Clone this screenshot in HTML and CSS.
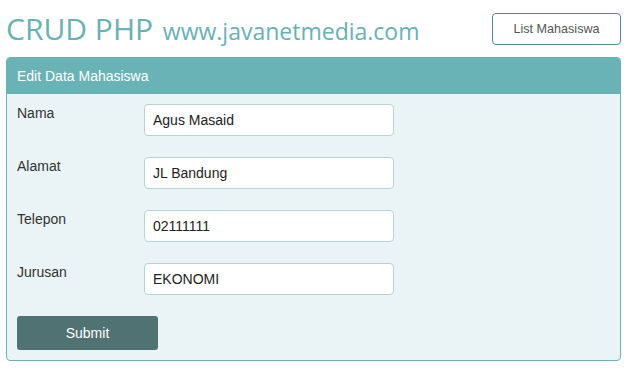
FILE: index.html
```html
<!DOCTYPE html>
<html>
<head>
<meta charset="utf-8">
<link rel="stylesheet" href="styles.css">
</head>
<body>
<div class="page">
  <div class="topbar">
    <h1 class="title">CRUD PHP <small class="site">www.javanetmedia.com</small></h1>
    <a class="list-btn" href="#">List Mahasiswa</a>
  </div>
  <div class="panel">
    <div class="panel-head">Edit Data Mahasiswa</div>
    <form class="panel-body">
      <div class="row">
        <label class="lbl">Nama</label>
        <input class="inp" type="text" value="Agus Masaid">
      </div>
      <div class="row">
        <label class="lbl">Alamat</label>
        <input class="inp" type="text" value="JL Bandung">
      </div>
      <div class="row">
        <label class="lbl">Telepon</label>
        <input class="inp" type="text" value="02111111">
      </div>
      <div class="row">
        <label class="lbl">Jurusan</label>
        <input class="inp" type="text" value="EKONOMI">
      </div>
      <button class="submit" type="button">Submit</button>
    </form>
  </div>
</div>
</body>
</html>
```
FILE: styles.css
```css
html, body {
  margin: 0;
  padding: 0;
  background: #ffffff;
}
body {
  font-family: "Liberation Sans", Arial, sans-serif;
  font-size: 14px;
  color: #333333;
}
.page {
  padding: 0 10px 0 6px;
}
.topbar {
  display: flex;
  justify-content: space-between;
  align-items: flex-start;
  height: 57px;
  box-sizing: border-box;
  padding-top: 11px;
}
.title {
  margin: 0;
  font-family: "Open Sans", sans-serif;
  font-weight: 400;
  font-size: 30px;
  line-height: 36px;
  color: #66b2b5;
  white-space: nowrap;
}
.site {
  font-size: 23px;
  margin-left: 2px;
}
.list-btn {
  margin-top: 2px;
  display: flex;
  align-items: center;
  justify-content: center;
  width: 129px;
  height: 32px;
  box-sizing: border-box;
  border: 1px solid #4f8a8c;
  border-radius: 4px;
  color: #555555;
  font-size: 12.6px;
  text-decoration: none;
}
.panel {
  border: 1px solid #69b3b7;
  border-radius: 4px;
  background: #eaf4f6;
  overflow: hidden;
}
.panel-head {
  background: #69b3b7;
  color: #ffffff;
  height: 36px;
  box-sizing: border-box;
  padding: 10px 10px 0;
  font-size: 14px;
  line-height: 16px;
}
.panel-body {
  margin: 0;
  padding: 10px 10px 10px 10px;
  display: flex;
  flex-direction: column;
  gap: 21px;
}
.row {
  display: flex;
  align-items: flex-start;
}
.lbl {
  width: 127px;
  flex: none;
  padding-top: 1px;
  line-height: 16px;
  color: #333333;
}
.inp {
  width: 250px;
  height: 32px;
  box-sizing: border-box;
  margin: 0;
  border: 1px solid #b4d4d7;
  border-radius: 4px;
  background: #ffffff;
  padding: 0 8px;
  font-family: "Liberation Sans", Arial, sans-serif;
  font-size: 14px;
  color: #222222;
  outline: none;
}
.submit {
  width: 141px;
  height: 34px;
  border: none;
  border-radius: 3px;
  background: #507272;
  color: #ffffff;
  font-family: "Liberation Sans", Arial, sans-serif;
  font-size: 14px;
  padding: 0;
}
```
